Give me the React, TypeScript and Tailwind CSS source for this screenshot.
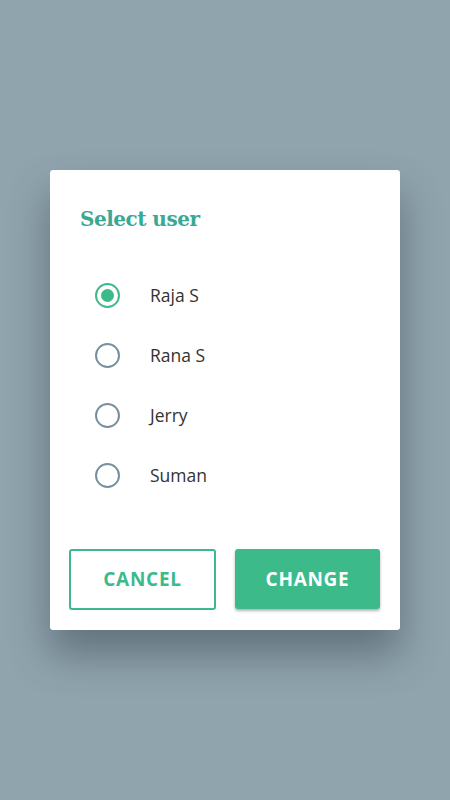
const users = ["Raja S", "Rana S", "Jerry", "Suman"];

export default function App() {
  const selected = "Raja S";

  return (
    <div className="flex h-[800px] w-full items-center justify-center bg-[#90a4ae] font-['Open_Sans',sans-serif]">
      <div className="flex w-[350px] flex-col rounded-[3px] bg-white px-[19px] pb-[20px] pt-[34px] shadow-[0_24px_40px_rgba(40,55,65,0.45)]">
        <div className="ml-[11px] h-[30px] font-['DejaVu_Serif',serif] text-[20px] font-semibold leading-[30px] tracking-[-0.5px] text-[#3aa895]">
          Select user
        </div>

        <div className="mt-[31px] flex flex-col">
          {users.map((u) => (
            <div key={u} className="flex h-[60px] items-center">
              <span
                className={
                  "ml-[26px] flex h-[25px] w-[25px] items-center justify-center rounded-full border-2 " +
                  (u === selected ? "border-[#3dba8a]" : "border-[#78909c]")
                }
              >
                {u === selected && <span className="h-[13px] w-[13px] rounded-full bg-[#3dba8a]" />}
              </span>
              <span className="ml-[30px] text-[17.5px] text-[#333]">{u}</span>
            </div>
          ))}
        </div>

        <div className="mt-[44px] flex gap-[19px]">
          <button className="flex h-[61px] w-[147px] items-center justify-center rounded-[3px] border-2 border-[#3dba8a] text-[19px] font-bold tracking-[0.7px] text-[#3dba8a]">
            CANCEL
          </button>
          <button className="flex h-[60px] w-[145px] items-center justify-center rounded-[3px] bg-[#3dba8a] text-[19px] font-bold tracking-[0.7px] text-white shadow-[0_2px_3px_rgba(0,0,0,0.3)]">
            CHANGE
          </button>
        </div>
      </div>
    </div>
  );
}
